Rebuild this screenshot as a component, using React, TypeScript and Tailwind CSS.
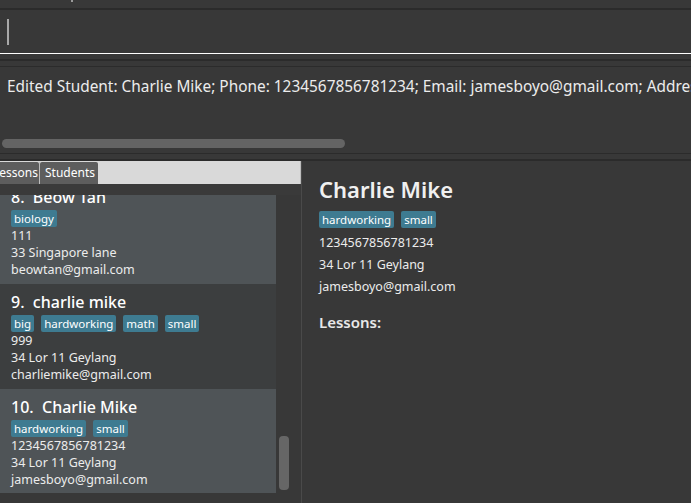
import React from "react";

type Student = {
  index: number;
  name: string;
  tags: string[];
  phone: string;
  address: string;
  email: string;
};

const students: Student[] = [
  { index: 8, name: "Beow Tan", tags: ["biology"], phone: "111", address: "33 Singapore lane", email: "beowtan@gmail.com" },
  { index: 9, name: "charlie mike", tags: ["big", "hardworking", "math", "small"], phone: "999", address: "34 Lor 11 Geylang", email: "charliemike@gmail.com" },
  { index: 10, name: "Charlie Mike", tags: ["hardworking", "small"], phone: "1234567856781234", address: "34 Lor 11 Geylang", email: "jamesboyo@gmail.com" },
];

function Tag({ label }: { label: string }) {
  return (
    <span className="inline-block bg-[#3e7b91] text-white text-[11.5px] leading-[17px] px-[3px] rounded-[2px]">
      {label}
    </span>
  );
}

function StudentCard({ s, odd }: { s: Student; odd: boolean }) {
  return (
    <div className={`h-[105px] pl-[11px] pt-[8px] ${odd ? "bg-[#3c3e3f]" : "bg-[#4f5457]"}`}>
      <div className="text-[16px] leading-[20px] font-medium text-white">
        {s.index}.&nbsp; {s.name}
      </div>
      <div className="flex gap-[7px] mt-[3px]">
        {s.tags.map((t) => (
          <Tag key={t} label={t} />
        ))}
      </div>
      <div className="text-[12.5px] leading-[17px] text-[#ececec]">
        <div>{s.phone}</div>
        <div>{s.address}</div>
        <div>{s.email}</div>
      </div>
    </div>
  );
}

export default function App() {
  const selected = students[2];

  return (
    <div
      className="w-[691px] h-[503px] overflow-hidden bg-[#383838] flex flex-col"
      style={{ fontFamily: '"Noto Sans", "Open Sans", sans-serif' }}
    >
      <div className="h-[8px] shrink-0 relative">
        <div className="absolute left-[71px] top-0 w-[2px] h-[2px] bg-[#9a9a9a]" />
      </div>
      <div className="h-[2px] shrink-0 bg-[#2b2b2b]" />

      {/* command box */}
      <div className="h-[43px] shrink-0 flex items-center pl-[7px]">
        <div className="w-[2px] h-[26px] bg-[#a8a8a8]" />
      </div>
      <div className="h-px shrink-0 bg-white" />
      <div className="h-[5px] shrink-0" />
      <div className="h-[2px] shrink-0 bg-[#2b2b2b]" />
      <div className="h-[5px] shrink-0" />
      <div className="h-px shrink-0 bg-[#2b2b2b]" />

      {/* result display */}
      <div className="h-[86px] shrink-0 flex flex-col">
        <div className="pl-[7px] pt-[9px] text-[15.4px] leading-[22px] text-[#ececec] whitespace-nowrap">
          Edited Student: Charlie Mike; Phone: 1234567856781234; Email: jamesboyo@gmail.com; Address: 34 Lor 11 Geylang; Tags: [hardworking][small]
        </div>
        <div className="mt-auto mb-[5px] ml-[2px] w-[343px] h-[9px] rounded-full bg-[#646464]" />
      </div>
      <div className="h-px shrink-0 bg-[#2b2b2b]" />
      <div className="h-[5px] shrink-0" />
      <div className="h-[2px] shrink-0 bg-[#2b2b2b]" />

      {/* main */}
      <div className="flex-1 flex min-h-0">
        <div className="w-[301px] shrink-0 flex flex-col">
          <div className="h-[23px] shrink-0 bg-[#d9d9d9] flex items-end border-r border-[#bdbdbd]">
            <div className="h-[22px] w-[39px] bg-[#5d5d5d] text-white text-[12px] leading-[22px] overflow-hidden flex justify-end pr-[1px] rounded-tr-[2px]">
              <span>essons</span>
            </div>
            <div className="h-[22px] w-px bg-[#bdbdbd]" />
            <div className="h-[22px] w-[58px] bg-[#5d5d5d] text-white text-[12px] leading-[22px] px-[5px] rounded-t-[2px]">
              Students
            </div>
          </div>
          <div className="h-[11px] shrink-0 bg-[#3a3a3a]" />
          <div className="h-[298px] shrink-0 flex">
            <div className="w-[276px] overflow-hidden">
              <div className="-mt-[16px]">
                {students.map((s, i) => (
                  <StudentCard key={s.index} s={s} odd={i % 2 === 1} />
                ))}
              </div>
            </div>
            <div className="flex-1 flex justify-center pl-[3px] pr-[12px]">
              <div className="mt-[241px] w-[10px] h-[54px] rounded-[4px] bg-[#666666]" />
            </div>
          </div>
        </div>
        <div className="w-px shrink-0 bg-[#4a4a4a]" />

        {/* detail panel */}
        <div className="flex-1 pl-[17px] pt-[14px]">
          <div className="text-[22px] leading-[28px] font-semibold text-[#f0f0f0]">{selected.name}</div>
          <div className="flex gap-[7px] mt-[8px]">
            {selected.tags.map((t) => (
              <Tag key={t} label={t} />
            ))}
          </div>
          <div className="text-[12.5px] leading-[22px] text-[#ececec] mt-[4px]">
            <div>{selected.phone}</div>
            <div>{selected.address}</div>
            <div>{selected.email}</div>
          </div>
          <div className="mt-[14px] text-[15px] leading-[20px] font-semibold text-[#e8e8e8]">Lessons:</div>
        </div>
      </div>
    </div>
  );
}
